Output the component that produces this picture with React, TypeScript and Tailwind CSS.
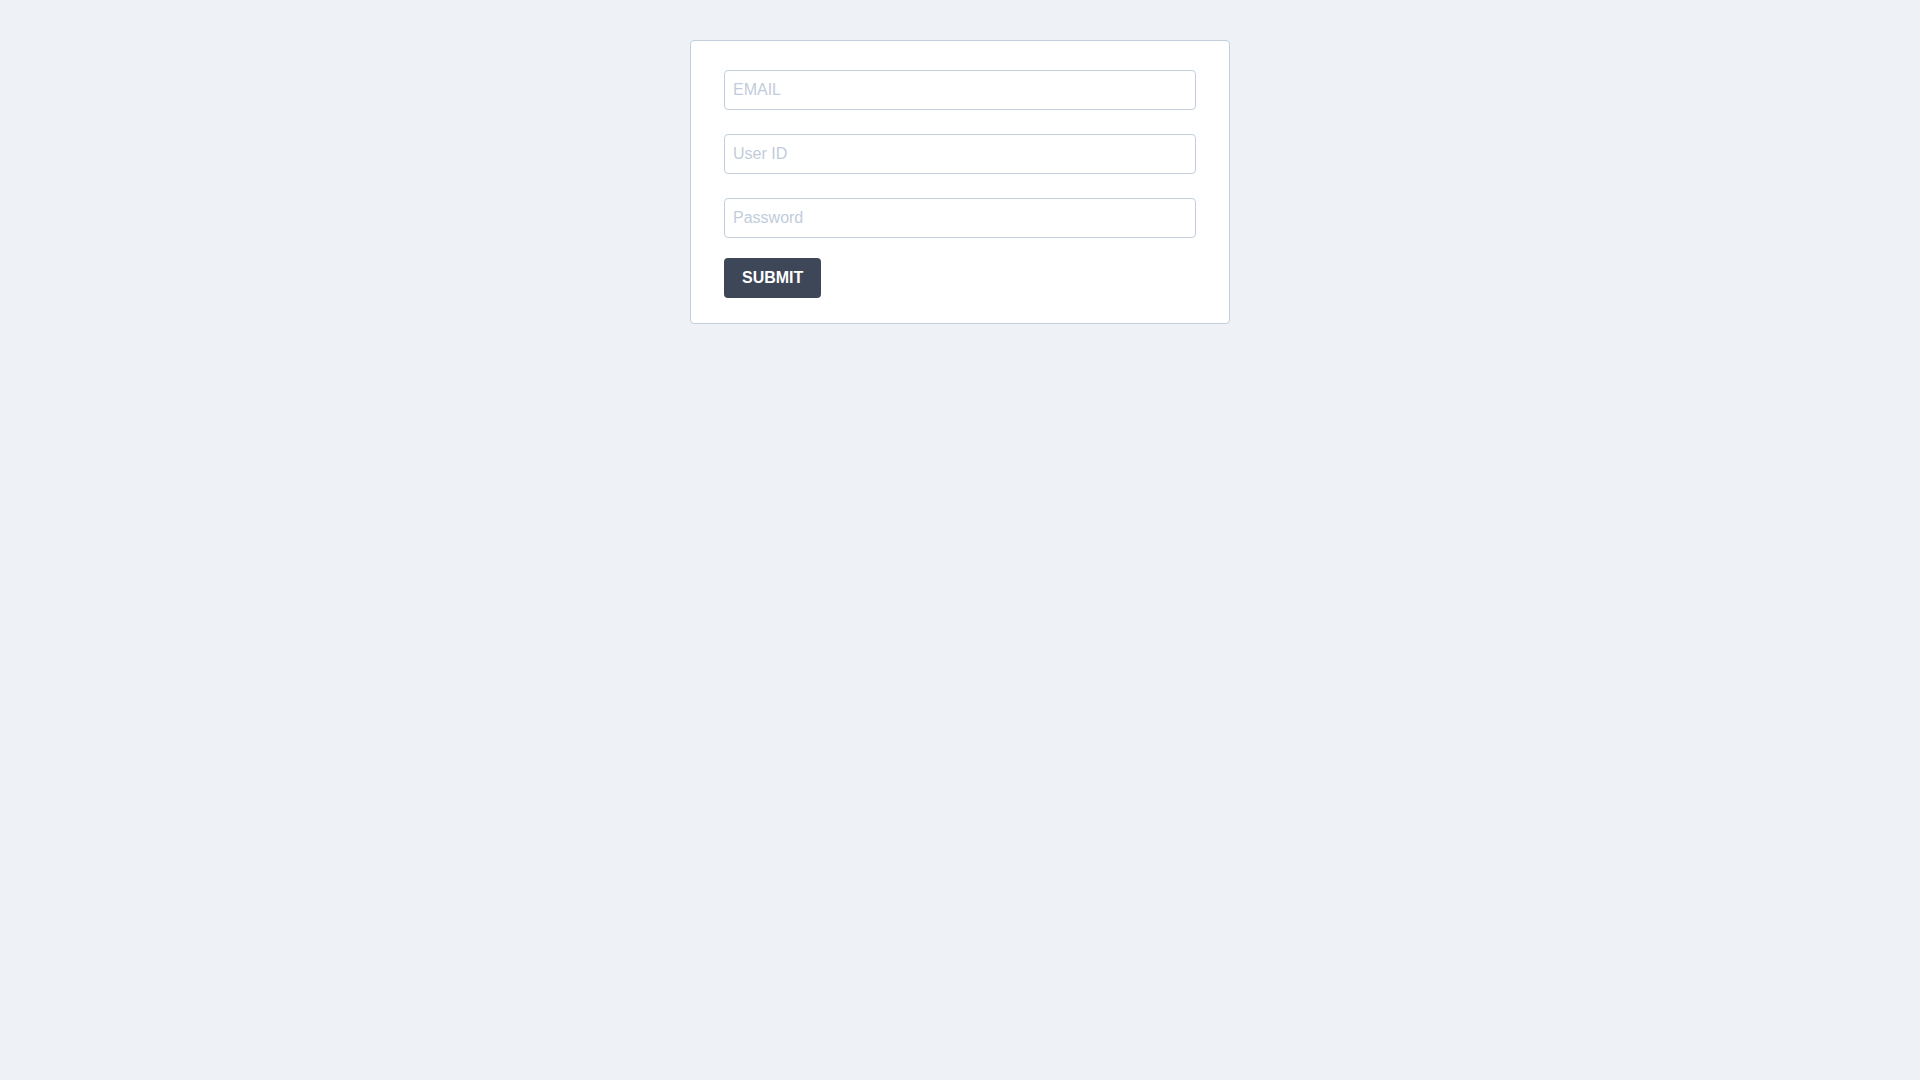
export default function App() {
  return (
    <div className="min-h-screen bg-[#eef2f7] pt-10 font-['Liberation_Sans',Arial,sans-serif]">
      <div className="mx-auto w-[540px] rounded border border-[#c3cedc] bg-white px-[33px] pt-[29px] pb-[25px]">
        <form className="flex flex-col" onSubmit={(e) => e.preventDefault()}>
          <input
            type="email"
            placeholder="EMAIL"
            className="h-10 w-full rounded border border-[#c3cedc] px-2 text-base text-gray-700 outline-none placeholder:text-[#c2ccdb]"
          />
          <input
            type="text"
            placeholder="User ID"
            className="mt-6 h-10 w-full rounded border border-[#c3cedc] px-2 text-base text-gray-700 outline-none placeholder:text-[#c2ccdb]"
          />
          <input
            type="password"
            placeholder="Password"
            className="mt-6 h-10 w-full rounded border border-[#c3cedc] px-2 text-base text-gray-700 outline-none placeholder:text-[#c2ccdb]"
          />
          <div className="mt-5">
            <button
              type="submit"
              className="h-10 rounded bg-[#3e4757] px-[18px] text-base font-bold text-white"
            >
              SUBMIT
            </button>
          </div>
        </form>
      </div>
    </div>
  );
}
